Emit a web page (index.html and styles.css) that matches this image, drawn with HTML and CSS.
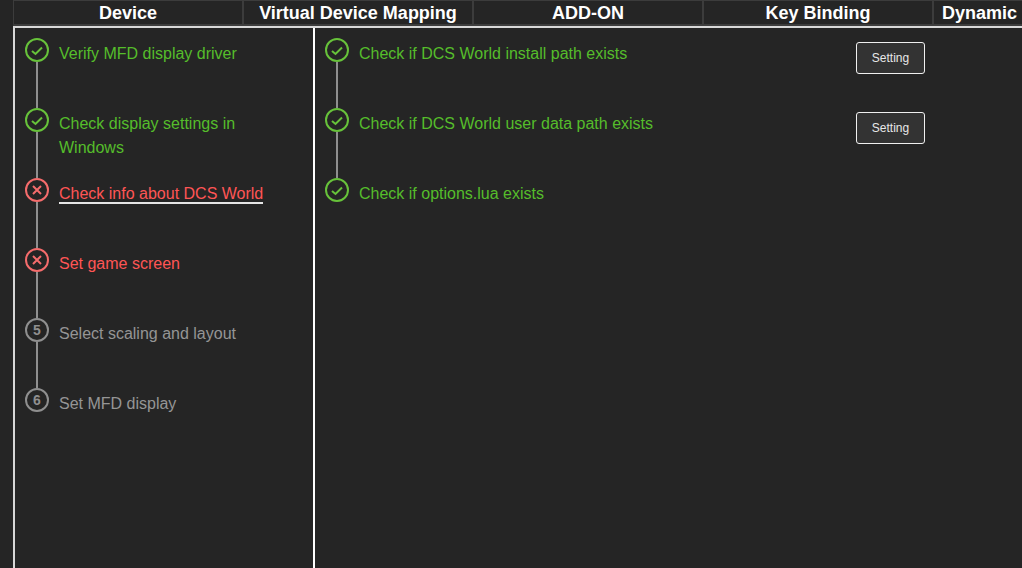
FILE: index.html
```html
<!DOCTYPE html>
<html lang="en">
<head>
    <meta charset="UTF-8">
    <meta name="viewport" content="width=device-width, initial-scale=1.0">
    <title>MFD Setup</title>
    <link rel="stylesheet" href="styles.css">
</head>
<body>
    <div class="app">
        <div class="tabs">
            <div class="tab">Device</div>
            <div class="tab">Virtual Device Mapping</div>
            <div class="tab">ADD-ON</div>
            <div class="tab">Key Binding</div>
            <div class="tab tab-cut">Dynamic</div>
        </div>
        <div class="content">
            <div class="steps-panel">
                <div class="step done">
                    <div class="step-side">
                        <span class="step-icon">
                            <svg viewBox="0 0 20 20"><path d="M5 11l3.5 3 6.5-6.500"/></svg>
                        </span>
                        <span class="step-line"></span>
                    </div>
                    <div class="step-title">Verify MFD display driver</div>
                </div>
                <div class="step done">
                    <div class="step-side">
                        <span class="step-icon">
                            <svg viewBox="0 0 20 20"><path d="M5 11l3.5 3 6.5-6.500"/></svg>
                        </span>
                        <span class="step-line"></span>
                    </div>
                    <div class="step-title">Check display settings in Windows</div>
                </div>
                <div class="step error">
                    <div class="step-side">
                        <span class="step-icon">
                            <svg viewBox="0 0 20 20"><path d="M6 6l8 8M14 6l-8 8"/></svg>
                        </span>
                        <span class="step-line"></span>
                    </div>
                    <div class="step-title"><span class="current">Check info about DCS World</span></div>
                </div>
                <div class="step error">
                    <div class="step-side">
                        <span class="step-icon">
                            <svg viewBox="0 0 20 20"><path d="M6 6l8 8M14 6l-8 8"/></svg>
                        </span>
                        <span class="step-line"></span>
                    </div>
                    <div class="step-title">Set game screen</div>
                </div>
                <div class="step waiting">
                    <div class="step-side">
                        <span class="step-icon">5</span>
                        <span class="step-line"></span>
                    </div>
                    <div class="step-title">Select scaling and layout</div>
                </div>
                <div class="step waiting">
                    <div class="step-side">
                        <span class="step-icon">6</span>
                    </div>
                    <div class="step-title">Set MFD display</div>
                </div>
            </div>
            <div class="checks-panel">
                <div class="step done">
                    <div class="step-side">
                        <span class="step-icon">
                            <svg viewBox="0 0 20 20"><path d="M5 11l3.5 3 6.5-6.500"/></svg>
                        </span>
                        <span class="step-line"></span>
                    </div>
                    <div class="step-title">Check if DCS World install path exists</div>
                    <button class="setting-btn">Setting</button>
                </div>
                <div class="step done">
                    <div class="step-side">
                        <span class="step-icon">
                            <svg viewBox="0 0 20 20"><path d="M5 11l3.5 3 6.5-6.500"/></svg>
                        </span>
                        <span class="step-line"></span>
                    </div>
                    <div class="step-title">Check if DCS World user data path exists</div>
                    <button class="setting-btn">Setting</button>
                </div>
                <div class="step done">
                    <div class="step-side">
                        <span class="step-icon">
                            <svg viewBox="0 0 20 20"><path d="M5 11l3.5 3 6.5-6.500"/></svg>
                        </span>
                    </div>
                    <div class="step-title">Check if options.lua exists</div>
                </div>
            </div>
        </div>
    </div>
</body>
</html>
```

FILE: styles.css
```css
html, body {
    margin: 0;
    height: 100%;
    overflow: hidden;
    background-color: #252525;
    font-family: "Liberation Sans", Arial, sans-serif;
}
.app {
    display: flex;
    flex-direction: column;
    height: 568px;
    padding-left: 13px;
    box-sizing: border-box;
}
.tabs {
    display: flex;
    flex: none;
    height: 28px;
    box-sizing: border-box;
    border-bottom: 2px solid #d8d8d8;
}
.tab {
    flex: none;
    width: 230px;
    box-sizing: border-box;
    border: 1px solid #3c3c3c;
    border-bottom-width: 2px;
    color: #fff;
    font-size: 18px;
    font-weight: bold;
    line-height: 25px;
    text-align: center;
}
.tab-cut {
    width: 89px;
    padding-left: 8px;
    border-right: none;
    text-align: left;
    white-space: nowrap;
}
.content {
    display: flex;
    flex: 1;
}
.steps-panel {
    width: 302px;
    flex: none;
    box-sizing: border-box;
    padding: 10px 10px 0 10px;
    border-left: 2px solid #d8d8d8;
    border-right: 2px solid #fff;
}
.checks-panel {
    flex: 1;
    padding: 10px 97px 0 10px;
}
.step {
    display: flex;
    height: 70px;
}
.step-side {
    display: flex;
    flex-direction: column;
    align-items: center;
    flex: none;
    width: 24px;
    margin-right: 10px;
}
.step-icon {
    display: flex;
    align-items: center;
    justify-content: center;
    flex: none;
    width: 24px;
    height: 24px;
    box-sizing: border-box;
    border: 2px solid;
    border-radius: 50%;
    font-size: 14px;
    font-weight: bold;
}
.step-icon svg {
    width: 20px;
    height: 20px;
    fill: none;
    stroke: currentColor;
    stroke-width: 2;
}
.step-line {
    width: 2px;
    height: 46px;
    background-color: #8f8f8f;
}
.step-title {
    flex: 1;
    padding-top: 4px;
    font-size: 16px;
    line-height: 24px;
}
.step.done .step-icon { color: #67c23a; }
.step.done .step-title { color: #55bd2b; }
.step.error .step-icon { color: #f56c6c; }
.step.error .step-title { color: #ff5555; }
.step.waiting .step-icon { color: #8f8f8f; }
.step.waiting .step-title { color: #959595; }
.current {
    display: inline-block;
    line-height: 16px;
    border-bottom: 2px solid #e6e6e6;
}
.setting-btn {
    flex: none;
    width: 69px;
    height: 32px;
    margin-top: 4px;
    padding: 0;
    background-color: #333;
    border: 1px solid #f0f0f0;
    border-radius: 3px;
    color: #e8e8e8;
    font-family: inherit;
    font-size: 12px;
}
```
